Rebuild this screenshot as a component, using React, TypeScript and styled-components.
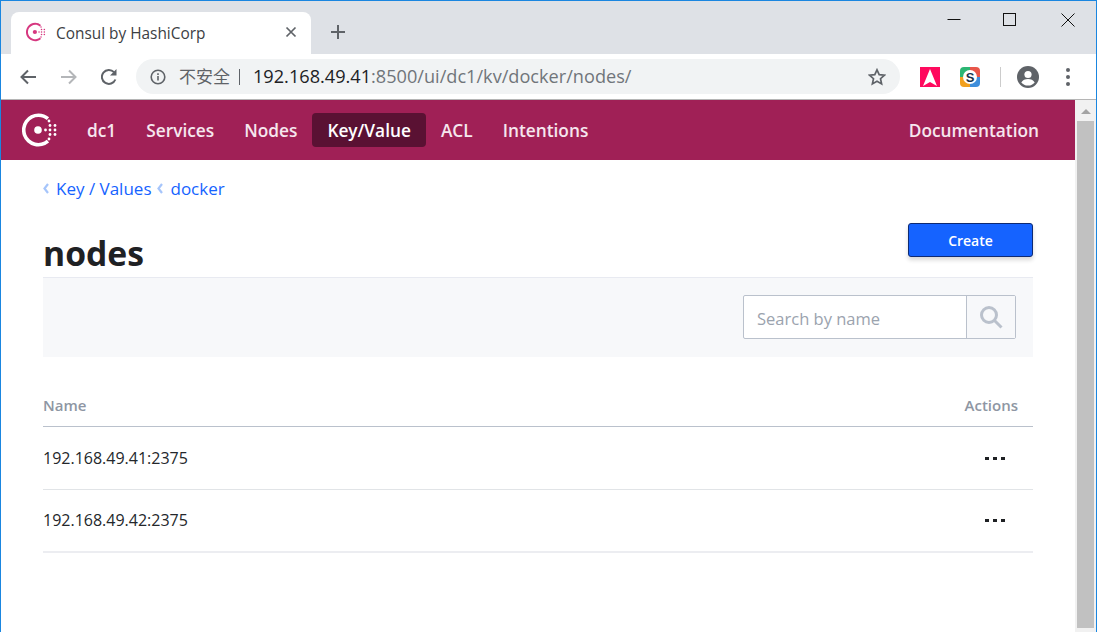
import React from "react";
import styled, {createGlobalStyle} from "styled-components";

const UI_FONT = `"Open Sans", "Noto Sans", "Noto Sans CJK SC", sans-serif`;

const Global = createGlobalStyle`
    html, body {
        margin: 0;
        padding: 0;
        overflow: hidden;
        background: #fff;
    }
    * {
        box-sizing: border-box;
    }
`;

const ConsulLogo: React.FC<{ size: number; color: string }> = ({size, color}) => (
    <svg width={size} height={size} viewBox="0 0 36 36" fill={color}>
        <path d="M16.500 1.500a16.500 16.500 0 1 0 10.600 29.100l-2.300-2.800A12.900 12.900 0 1 1 16.500 5.100c3.200 0 6 1.100 8.300 3l2.300-2.800A16.400 16.400 0 0 0 16.500 1.500z"/>
        <circle cx="16" cy="18" r="3.800"/>
        <circle cx="23.500" cy="18" r="1.400"/>
        <circle cx="28" cy="18" r="1.400"/>
        <circle cx="33" cy="18" r="1.400"/>
        <circle cx="28" cy="13.500" r="1.400"/>
        <circle cx="33" cy="13.500" r="1.400"/>
        <circle cx="28" cy="22.500" r="1.400"/>
        <circle cx="33" cy="22.500" r="1.400"/>
        <circle cx="27" cy="9" r="1.400"/>
        <circle cx="27" cy="27" r="1.400"/>
    </svg>
);

const BackIcon = ({color}: { color: string }) => (
    <svg width="18" height="18" viewBox="0 0 18 18" fill="none" stroke={color} strokeWidth="2">
        <path d="M17 9H2.500M9 2.500L2.500 9 9 15.500"/>
    </svg>
);

const ForwardIcon = ({color}: { color: string }) => (
    <svg width="18" height="18" viewBox="0 0 18 18" fill="none" stroke={color} strokeWidth="2">
        <path d="M1 9h14.500M9 2.500L15.500 9 9 15.500"/>
    </svg>
);

const CrumbChevron = () => (
    <svg width="6" height="11" viewBox="0 0 6 11" fill="none" stroke="#a6c5fb" strokeWidth="2.200">
        <path d="M5 1L1.500 5.500 5 10"/>
    </svg>
);

const App: React.FC = () => {
    return (
        <Screen>
            <Global/>
            <TabStrip>
                <Tab>
                    <ConsulLogo size={20} color="#d6377f"/>
                    <TabTitle>Consul by HashiCorp</TabTitle>
                    <svg width="12" height="12" viewBox="0 0 12 12" stroke="#5f6368" strokeWidth="1.700">
                        <path d="M1.500 1.500l9 9M10.500 1.500l-9 9"/>
                    </svg>
                </Tab>
                <NewTab>
                    <svg width="16" height="16" viewBox="0 0 16 16" stroke="#5f6368" strokeWidth="2">
                        <path d="M8 1v14M1 8h14"/>
                    </svg>
                </NewTab>
                <WindowControls>
                    <WindowButton>
                        <svg width="14" height="14" viewBox="0 0 14 14" stroke="#111" strokeWidth="1">
                            <path d="M0.500 6.500h13"/>
                        </svg>
                    </WindowButton>
                    <WindowButton>
                        <svg width="14" height="14" viewBox="0 0 14 14" fill="none" stroke="#111" strokeWidth="1" overflow="visible">
                            <rect x="-0.500" y="0.500" width="12" height="12"/>
                        </svg>
                    </WindowButton>
                    <WindowButton>
                        <svg width="14" height="14" viewBox="0 0 14 14" stroke="#111" strokeWidth="1">
                            <path d="M0.500 0.500l13 13M13.500 0.500l-13 13"/>
                        </svg>
                    </WindowButton>
                </WindowControls>
            </TabStrip>

            <Toolbar>
                <NavIcons>
                    <BackIcon color="#5f6368"/>
                    <ForwardIcon color="#b4b6b9"/>
                    <svg width="18" height="18" viewBox="1 0 18 18" fill="none" stroke="#5f6368" strokeWidth="2">
                        <path d="M15.400 11.500A7 7 0 1 1 14 4.100"/>
                        <path d="M16.500 1v6.500H10" fill="#5f6368" stroke="none"/>
                    </svg>
                </NavIcons>
                <Omnibox>
                    <svg width="16" height="16" viewBox="0 0 16 16" fill="none" stroke="#5f6368" strokeWidth="1.600">
                        <circle cx="8" cy="8" r="6.800"/>
                        <path d="M8 7v4.600M8 4.200v1.700"/>
                    </svg>
                    <Insecure>不安全</Insecure>
                    <OmniDivider/>
                    <Url><b>192.168.49.41</b>:8500/ui/dc1/kv/docker/nodes/</Url>
                    <svg width="18" height="18" viewBox="0 0 18 18" fill="none" stroke="#5f6368" strokeWidth="1.700">
                        <path d="M9 1.800l2.200 4.800 5.200.6-3.900 3.500 1.100 5.200L9 13.300l-4.600 2.600 1.100-5.200L1.600 7.200l5.200-.6z"/>
                    </svg>
                </Omnibox>
                <Extensions>
                    <svg width="20" height="20" viewBox="0 0 20 20">
                        <rect width="20" height="20" fill="#ff0a5e"/>
                        <path d="M10 2l7 17-7-4-7 4z" fill="#fff"/>
                    </svg>
                    <svg width="20" height="20" viewBox="0 0 20 20">
                        <path d="M4 0h6v10H0V4a4 4 0 0 1 4-4z" fill="#2bb673"/>
                        <path d="M10 0h6a4 4 0 0 1 4 4v6H10z" fill="#e8564a"/>
                        <path d="M0 10h10v10H4a4 4 0 0 1-4-4z" fill="#f2a01e"/>
                        <path d="M10 10h10v6a4 4 0 0 1-4 4h-6z" fill="#3f8fdc"/>
                        <circle cx="10" cy="10" r="7" fill="#fff"/>
                        <SnapText x="10" y="14.500" textAnchor="middle">S</SnapText>
                    </svg>
                    <ToolbarDivider/>
                    <svg width="22" height="22" viewBox="0 0 22 22">
                        <circle cx="11" cy="11" r="11" fill="#5f6368"/>
                        <circle cx="11" cy="8.500" r="3.600" fill="#fff"/>
                        <path d="M4.300 16.400c1.200-2.400 4-3.500 6.700-3.500s5.500 1.100 6.700 3.500A8.500 8.500 0 0 1 11 19.500a8.500 8.500 0 0 1-6.700-3.100z" fill="#fff"/>
                    </svg>
                    <MenuDots>
                        <i/><i/><i/>
                    </MenuDots>
                </Extensions>
            </Toolbar>

            <Viewport>
                <Page>
                    <TopNav>
                        <ConsulLogo size={36} color="#fff"/>
                        <NavLinks>
                            <NavLink>dc1</NavLink>
                            <NavLink>Services</NavLink>
                            <NavLink>Nodes</NavLink>
                            <NavLink $active>Key/Value</NavLink>
                            <NavLink>ACL</NavLink>
                            <NavLink>Intentions</NavLink>
                        </NavLinks>
                        <NavLink>Documentation</NavLink>
                    </TopNav>
                    <Main>
                        <Breadcrumbs>
                            <Crumb><CrumbChevron/>Key / Values</Crumb>
                            <Crumb><CrumbChevron/>docker</Crumb>
                        </Breadcrumbs>
                        <TitleRow>
                            <Title>nodes</Title>
                            <CreateButton>Create</CreateButton>
                        </TitleRow>
                        <FilterBar>
                            <SearchBox>
                                <SearchText>Search by name</SearchText>
                                <SearchButton>
                                    <svg width="24" height="24" viewBox="0 0 24 24" fill="none" stroke="#bac1cc">
                                        <circle cx="10" cy="10" r="7.500" strokeWidth="3"/>
                                        <path d="M15.500 15.500l7 7" strokeWidth="3"/>
                                    </svg>
                                </SearchButton>
                            </SearchBox>
                        </FilterBar>
                        <TableHead>
                            <span>Name</span>
                            <span>Actions</span>
                        </TableHead>
                        <Row>
                            <span>192.168.49.41:2375</span>
                            <MoreDots><i/><i/><i/></MoreDots>
                        </Row>
                        <Row $last>
                            <span>192.168.49.42:2375</span>
                            <MoreDots><i/><i/><i/></MoreDots>
                        </Row>
                    </Main>
                </Page>
                <Scrollbar>
                    <ScrollArrow/>
                    <ScrollThumb/>
                </Scrollbar>
            </Viewport>
        </Screen>
    );
};

export default App;

const Screen = styled.div`
    width: 1097px;
    height: 632px;
    display: flex;
    flex-direction: column;
    overflow: hidden;
    border: 1px solid #1a86e0;
    border-bottom: 0;
    font-family: ${UI_FONT};
`;

const TabStrip = styled.div`
    height: 53px;
    flex-shrink: 0;
    background: #dee1e6;
    display: flex;
    align-items: flex-end;
    padding-left: 10px;
`;

const Tab = styled.div`
    width: 300px;
    height: 42px;
    background: #fff;
    border-radius: 8px 8px 0 0;
    display: flex;
    align-items: center;
    padding: 0 14px 2px 15px;
`;

const TabTitle = styled.span`
    flex: 1;
    margin-left: 10px;
    padding-top: 2px;
    font-size: 15.400px;
    color: #3c4043;
`;

const NewTab = styled.div`
    width: 54px;
    height: 42px;
    display: flex;
    align-items: center;
    justify-content: center;
    padding-bottom: 2px;
`;

const WindowControls = styled.div`
    margin-left: auto;
    align-self: flex-start;
    display: flex;
    padding: 12px 21px 0 0;
    gap: 43px;
`;

const WindowButton = styled.div`
    width: 14px;
    height: 14px;
    display: flex;
`;

const Toolbar = styled.div`
    height: 46px;
    flex-shrink: 0;
    background: #fff;
    border-bottom: 1px solid #b5b5b5;
    display: flex;
    align-items: flex-start;
    padding: 5px 0 0 18px;
`;

const NavIcons = styled.div`
    display: flex;
    align-items: center;
    gap: 23px;
    height: 35px;
    width: 117px;
`;

const Omnibox = styled.div`
    width: 764px;
    height: 35px;
    border-radius: 18px;
    background: #f1f3f4;
    display: flex;
    align-items: center;
    padding: 0 14px;
`;

const Insecure = styled.span`
    margin-left: 13px;
    padding-bottom: 2px;
    font-size: 17px;
    color: #5f6368;
    font-family: "Noto Sans CJK SC", sans-serif;
`;

const OmniDivider = styled.span`
    width: 1px;
    height: 16px;
    margin: 0 13px 0 9px;
    background: #5f6368;
`;

const Url = styled.span`
    flex: 1;
    padding-bottom: 2px;
    font-size: 18.150px;
    color: #70757a;
    white-space: nowrap;

    b {
        font-weight: 400;
        color: #202124;
    }
`;

const Extensions = styled.div`
    display: flex;
    align-items: center;
    height: 35px;
    margin-left: 20px;

    svg + svg {
        margin-left: 20px;
    }
`;

const SnapText = styled.text`
    font-family: "Liberation Sans", sans-serif;
    font-weight: 700;
    font-size: 13px;
    fill: #17324d;
`;

const ToolbarDivider = styled.span`
    width: 1px;
    height: 20px;
    background: #ccc;
    margin: 0 16px 0 20px;
`;

const MenuDots = styled.span`
    display: flex;
    flex-direction: column;
    gap: 3px;
    margin-left: 27px;

    i {
        width: 4px;
        height: 4px;
        border-radius: 50%;
        background: #5f6368;
    }
`;

const Viewport = styled.div`
    flex: 1;
    min-height: 0;
    display: flex;
`;

const Page = styled.div`
    flex: 1;
    min-width: 0;
    background: #fff;
    display: flex;
    flex-direction: column;
`;

const TopNav = styled.nav`
    height: 60px;
    flex-shrink: 0;
    background: #a02056;
    display: flex;
    align-items: center;
    padding: 0 21px;
`;

const NavLinks = styled.div`
    flex: 1;
    display: flex;
    align-items: center;
    margin-left: 14px;
`;

const NavLink = styled.a<{ $active?: boolean }>`
    height: 34px;
    display: flex;
    align-items: center;
    padding: 0 15px;
    border-radius: 4px;
    font-size: 17.300px;
    font-weight: 600;
    color: ${p => p.$active ? "#fff" : "#f6e6ee"};
    background: ${p => p.$active ? "#5a1133" : "transparent"};
`;

const Main = styled.main`
    flex: 1;
    padding: 0 42px;
    display: flex;
    flex-direction: column;
`;

const Breadcrumbs = styled.div`
    display: flex;
    align-items: center;
    gap: 6px;
    height: 24px;
    margin-top: 16px;
`;

const Crumb = styled.a`
    font-size: 17px;
    color: #1563ff;
    display: flex;
    align-items: center;
    gap: 7px;
`;

const TitleRow = styled.div`
    height: 54px;
    margin-top: 23px;
    display: flex;
    justify-content: space-between;
    align-items: flex-start;
`;

const Title = styled.h1`
    margin: 6px 0 0;
    font-size: 33.700px;
    line-height: 48px;
    font-weight: 700;
    color: #1f2124;
`;

const CreateButton = styled.button`
    width: 125px;
    height: 34px;
    background: #1563ff;
    border: 1px solid #0e2a72;
    border-radius: 3px;
    box-shadow: 0 3px 4px rgba(0, 0, 0, 0.16);
    color: #fff;
    font-family: ${UI_FONT};
    font-size: 14px;
    font-weight: 600;
    padding: 0;
`;

const FilterBar = styled.div`
    height: 80px;
    flex-shrink: 0;
    background: #f7f8fa;
    border-top: 1px solid #e8eaf1;
    display: flex;
    justify-content: flex-end;
    align-items: flex-start;
    padding: 17px 17px 0 0;
`;

const SearchBox = styled.div`
    width: 273px;
    height: 44px;
    display: flex;
    background: #fff;
    border: 1px solid #bac1cc;
    border-radius: 2px;
`;

const SearchText = styled.span`
    flex: 1;
    padding-left: 13px;
    font-size: 16.500px;
    line-height: 45px;
    color: #9ba3ae;
`;

const SearchButton = styled.div`
    width: 49px;
    background: #f7f8fa;
    border-left: 1px solid #bac1cc;
    display: flex;
    align-items: center;
    justify-content: center;
`;

const TableHead = styled.div`
    height: 70px;
    flex-shrink: 0;
    border-bottom: 1px solid #bac1cc;
    display: flex;
    justify-content: space-between;
    align-items: flex-end;
    padding: 0 15px 11px 0;
    font-size: 15px;
    font-weight: 600;
    color: #8e96a3;
`;

const Row = styled.div<{ $last?: boolean }>`
    height: 63px;
    flex-shrink: 0;
    border-bottom: ${p => p.$last ? "2px solid #ecedf1" : "1px solid #e1e4e7"};
    display: flex;
    justify-content: space-between;
    align-items: center;
    padding: 0 28px ${p => p.$last ? 2 : 1}px 0;
    font-size: 16px;
    color: #24272b;
`;

const MoreDots = styled.span`
    display: flex;
    gap: 4px;
    margin-top: 2px;

    i {
        width: 4px;
        height: 3px;
        background: #1f2124;
    }
`;

const Scrollbar = styled.div`
    width: 21px;
    flex-shrink: 0;
    background: #f1f1f1;
    padding: 0 2px;
    display: flex;
    flex-direction: column;
    align-items: center;
`;

const ScrollArrow = styled.div`
    margin-top: 9px;
    width: 0;
    height: 0;
    border-left: 5px solid transparent;
    border-right: 5px solid transparent;
    border-bottom: 5px solid #a3a3a3;
`;

const ScrollThumb = styled.div`
    margin: 7px 0 4px;
    width: 100%;
    flex: 1;
    background: #c1c1c1;
`;
